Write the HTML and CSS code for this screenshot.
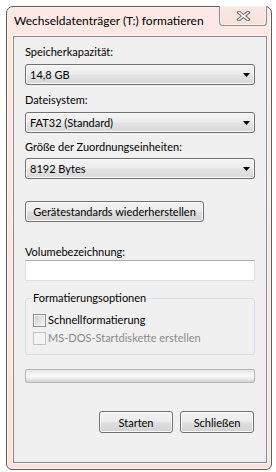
FILE: index.html
```html
<!DOCTYPE html>
<html lang="de">
<head>
<meta charset="utf-8">
<title>Formatieren</title>
<link rel="stylesheet" href="styles.css">
</head>
<body>
<div class="win">
  <div class="titlebar">
    <span class="title">Wechseldatenträger (T:) formatieren</span>
    <div class="close">
      <svg width="15" height="10" viewBox="0 0 15 10">
        <path d="M3 1.5 L12 8.5 M12 1.5 L3 8.5" stroke="#6b6b6b" stroke-width="3.6" stroke-linecap="square" fill="none"/>
        <path d="M3 1.5 L12 8.5 M12 1.5 L3 8.5" stroke="#f4f4f4" stroke-width="1.6" stroke-linecap="square" fill="none"/>
      </svg>
    </div>
  </div>
  <div class="client">
    <div class="lbl l1">Speicherkapazität:</div>
    <div class="combo c1"><span>14,8 GB</span><svg class="arrow" width="7" height="4" viewBox="0 0 7 4"><polygon points="0,0 7,0 3.5,4" fill="#000"/></svg></div>
    <div class="lbl l2">Dateisystem:</div>
    <div class="combo c2"><span>FAT32 (Standard)</span><svg class="arrow" width="7" height="4" viewBox="0 0 7 4"><polygon points="0,0 7,0 3.5,4" fill="#000"/></svg></div>
    <div class="lbl l3">Größe der Zuordnungseinheiten:</div>
    <div class="combo c3"><span>8192 Bytes</span><svg class="arrow" width="7" height="4" viewBox="0 0 7 4"><polygon points="0,0 7,0 3.5,4" fill="#000"/></svg></div>
    <button class="btn restore">Gerätestandards wiederherstellen</button>
    <div class="lbl l4">Volumebezeichnung:</div>
    <div class="input"></div>
    <fieldset class="group">
      <legend>Formatierungsoptionen</legend>
      <div class="row"><span class="cb"></span><span>Schnellformatierung</span></div>
      <div class="row disabled"><span class="cb"></span><span>MS-DOS-Startdiskette erstellen</span></div>
    </fieldset>
    <div class="progress"></div>
    <div class="actions">
      <button class="btn act">Starten</button>
      <button class="btn act">Schließen</button>
    </div>
  </div>
</div>
</body>
</html>
```
FILE: styles.css
```css
html, body {
  margin: 0;
  background: #ffffff;
}
body {
  font-family: "Lato", "Noto Sans", sans-serif;
  font-size: 11px;
  color: #000;
}
.win {
  margin: 6px 0 0 6px;
  width: 266px;
  height: 464px;
  box-sizing: border-box;
  border: 1px solid #5c5c5c;
  border-radius: 7px 7px 6px 6px;
  background: linear-gradient(#fce9e5, #fbe2dc);
  padding: 0 4px 6px 6px;
  display: flex;
  flex-direction: column;
  box-shadow: inset 0 0 0 1px #fff3f0;
}
.titlebar {
  height: 29px;
  flex-shrink: 0;
  display: flex;
  justify-content: space-between;
  align-items: flex-start;
}
.title {
  margin: 6px 0 0 1px;
  line-height: 15px;
  font-size: 12px;
}
.close {
  width: 48px;
  height: 20px;
  margin-top: -1px;
  box-sizing: border-box;
  border: 1px solid #8d8d8d;
  border-top: none;
  border-radius: 0 0 4px 4px;
  background: linear-gradient(#fbe9e5, #f7dfd9);
  box-shadow: inset 0 0 0 1px #fdf2ef;
  display: flex;
  justify-content: center;
  align-items: center;
}
.client {
  flex: 1;
  border: 1px solid #8c8c8c;
  background: #f0f0f0;
  padding: 0 11px;
  display: flex;
  flex-direction: column;
  box-shadow: 0 0 0 1px #fff4f1;
}
.lbl {
  line-height: 15px;
  height: 15px;
  white-space: nowrap;
}
.l1 { margin-top: 7px; }
.l2 { margin-top: 7px; }
.l3 { margin-top: 6px; }
.l4 { margin-top: 22px; }
.combo {
  height: 21px;
  box-sizing: border-box;
  border: 1px solid #707070;
  border-radius: 3px;
  background: linear-gradient(#f4f4f4, #ededed 45%, #e2e2e2 55%, #d9d9d9);
  box-shadow: inset 0 0 0 1px #fbfbfb;
  display: flex;
  align-items: center;
  justify-content: space-between;
  padding: 0 4px 0 4px;
  white-space: nowrap;
}
.c1 { margin-top: 5px; }
.c2 { margin-top: 5px; }
.c3 { margin-top: 4px; }
.arrow { display: block; }
.btn {
  font: inherit;
  color: #000;
  height: 21px;
  box-sizing: border-box;
  border: 1px solid #707070;
  border-radius: 3px;
  background: linear-gradient(#f3f3f3, #ececec 45%, #dedede 55%, #d2d2d2);
  box-shadow: inset 0 0 0 1px #fbfbfb;
  padding: 0;
  line-height: 17px;
  white-space: nowrap;
}
.restore {
  margin-top: 22px;
  width: 179px;
  align-self: flex-start;
}
.input {
  margin-top: 1px;
  height: 21px;
  box-sizing: border-box;
  border: 1px solid #dbdfe6;
  border-top-color: #abadb3;
  background: #fff;
}
.group {
  margin: 9px 0 0 0;
  padding: 0 7px 7px 7px;
  border: 1px solid #d5dfe5;
  border-radius: 3px;
  min-width: 0;
}
.group legend {
  padding: 0 1px;
  margin-left: -1px;
  line-height: 16px;
}
.row {
  height: 18px;
  display: flex;
  align-items: flex-start;
  line-height: 18px;
  white-space: nowrap;
}
.row:first-of-type { margin-top: 5px; }
.cb {
  width: 13px;
  height: 13px;
  margin-top: 3px;
  margin-right: 2px;
  box-sizing: border-box;
  border: 1px solid #8e8f8f;
  background: linear-gradient(135deg, #cdcdcd, #f6f6f6);
  box-shadow: inset 0 0 0 1px #f4f4f4;
  flex-shrink: 0;
}
.disabled { color: #8a8a8a; }
.disabled .cb {
  border-color: #c3c3c3;
  background: #f4f4f4;
  box-shadow: none;
}
.progress {
  margin-top: 14px;
  height: 14px;
  box-sizing: border-box;
  border: 1px solid #b5b5b5;
  border-radius: 2px;
  background: linear-gradient(#e4e4e4, #f3f3f3 30%, #fafafa 55%, #dedede 85%, #d2d2d2);
}
.actions {
  margin-top: 28px;
  display: flex;
  justify-content: flex-end;
  gap: 7px;
  padding-right: 1px;
}
.act {
  width: 74px;
  height: 22px;
}
```
